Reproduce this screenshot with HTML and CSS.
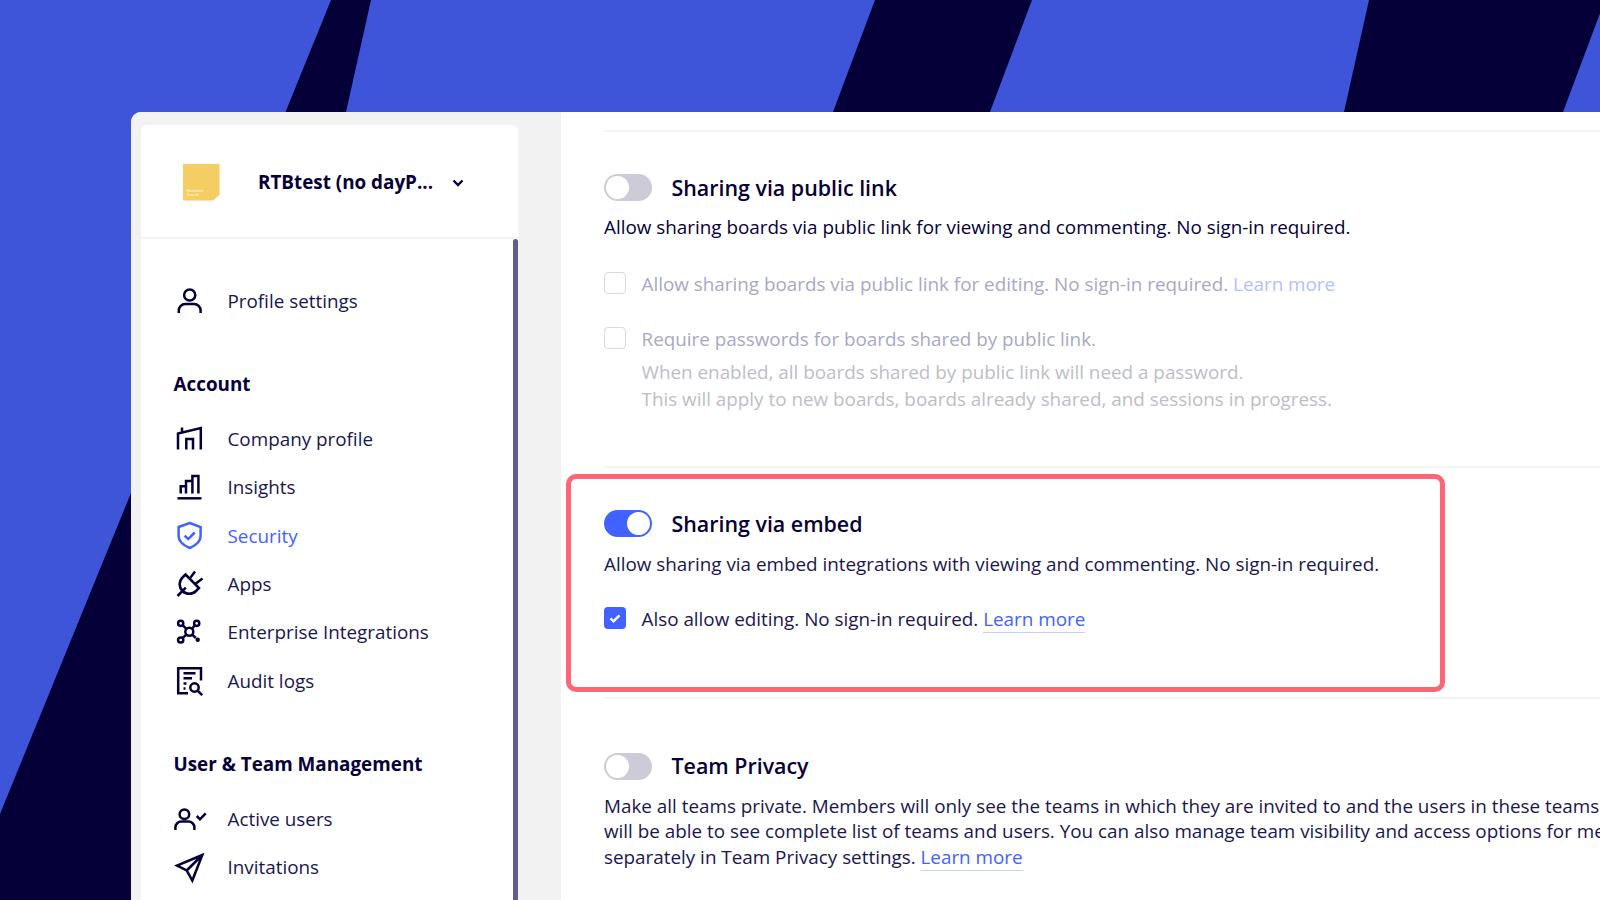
FILE: index.html
```html
<!DOCTYPE html>
<html lang="en">
<head>
<meta charset="utf-8">
<title>Security settings</title>
<link rel="stylesheet" href="styles.css">
</head>
<body>
<svg class="backdrop" viewBox="0 0 1600 900" aria-hidden="true">
  <polygon class="shape" points="331,0 371,0 346,112 285.5,112"/>
  <polygon class="shape" points="875,0 1032,0 990,112 833,112"/>
  <polygon class="shape" points="1369,0 1605,0 1563,112 1344,112"/>
  <polygon class="shape" points="131,493 131,900 0,900 0,814"/>
</svg>
<div class="panel">
  <div class="rail">
    <aside class="sidebar">
      <header class="account">
        <div class="logo"><span class="logo-text">Realtime<br>Board</span></div>
        <span class="account-name">RTBtest (no dayP...</span>
        <svg class="chevron" viewBox="0 0 12 8"><path d="M1.5 1.5 6 6l4.5-4.5"/></svg>
      </header>
      <div class="side-body">
        <nav class="nav">
          <a class="row">
            <svg class="icon" viewBox="0 0 30 30"><circle cx="14.7" cy="9" r="5.6"/><path d="M3.8 27v-2.5a6.5 6.5 0 0 1 6.5-6.5h8.8a6.5 6.5 0 0 1 6.5 6.5V27"/></svg>
            <span>Profile settings</span>
          </a>
          <h3 class="group">Account</h3>
          <a class="row">
            <svg class="icon" viewBox="0 0 30 30"><path d="M3 25.5V9.5L25.8 4V25.5M7 3.5V8.5M11.3 25.5V15H18V25.5"/></svg>
            <span>Company profile</span>
          </a>
          <a class="row">
            <svg class="icon" viewBox="0 0 30 30"><path d="M2.5 26.3H26.5"/><path d="M5.7 21.5V14.2H11M11 21.5V8.9H17.4V21.5M17.4 21.5V4H23.4V21.5"/></svg>
            <span>Insights</span>
          </a>
          <a class="row row-active">
            <svg class="icon" viewBox="0 0 30 30"><path d="M14.7 2 25.6 6V15c0 5.2-4.7 9.4-10.9 12C8.5 24.4 3.6 20.2 3.6 15V6Z"/><path d="M9.6 14.6l3.6 3.5 6.6-6.6"/></svg>
            <span>Security</span>
          </a>
          <a class="row">
            <svg class="icon" viewBox="0 0 30 30"><path d="M10.5 5.5 24 19l-3 3a9.5 9.5 0 0 1-13.5-13.5ZM14.8 9.5 20 2.5M20.2 15 27.5 9.5M10.8 18.6 2.5 27"/></svg>
            <span>Apps</span>
          </a>
          <a class="row">
            <svg class="icon" viewBox="0 0 30 30"><circle cx="14.3" cy="14.7" r="4"/><circle cx="5.7" cy="6.3" r="2.6"/><circle cx="21.7" cy="6.3" r="2.6"/><circle cx="5.7" cy="23" r="2.6"/><circle class="dot" cx="22.7" cy="22.8" r="2.2"/><path d="M7.6 8.2 11.4 11.8M19.9 8.1 17.2 11.8M7.6 21 11.4 17.6M17.2 17.6 20.8 21"/></svg>
            <span>Enterprise Integrations</span>
          </a>
          <a class="row">
            <svg class="icon" viewBox="0 0 30 30"><path d="M26 14.5V2.3H3.2V27.3H13M8.5 7.3H20.5M8.5 12.3H17M8.5 17.5H11.5M8.5 22.5H10.5"/><circle cx="19.5" cy="21.5" r="4.2"/><path d="M22.8 24.8 27.2 29.2"/></svg>
            <span>Audit logs</span>
          </a>
          <h3 class="group">User &amp; Team Management</h3>
          <a class="row">
            <svg class="icon" viewBox="0 0 30 30"><circle cx="9.4" cy="10.3" r="4.8"/><path d="M0.4 26V23.5a6 6 0 0 1 6-6h7a6 6 0 0 1 6 6V26M21.7 12 25 15.3 30.7 9.4"/></svg>
            <span>Active users</span>
          </a>
          <a class="row">
            <svg class="icon" viewBox="0 0 30 30"><path d="M27.3 3 2 13.5 11.7 18.5 17.3 28.5ZM27.3 3 11.7 18.5"/></svg>
            <span>Invitations</span>
          </a>
        </nav>
        <div class="scrollbar"></div>
      </div>
    </aside>
  </div>
  <main class="main">
    <hr class="rule rule-top">
    <section class="setting setting-public">
      <div class="title-row">
        <span class="toggle"><span class="knob"></span></span>
        <h2 class="title">Sharing via public link</h2>
      </div>
      <p class="text">Allow sharing boards via public link for viewing and commenting. No sign-in required.</p>
      <div class="check-row check-first is-disabled">
        <span class="check"></span>
        <span>Allow sharing boards via public link for editing. No sign-in required. <a class="link">Learn more</a></span>
      </div>
      <div class="check-row check-second is-disabled">
        <span class="check"></span>
        <span>Require passwords for boards shared by public link.</span>
      </div>
      <p class="hint">When enabled, all boards shared by public link will need a password.<br>This will apply to new boards, boards already shared, and sessions in progress.</p>
    </section>
    <hr class="rule rule-mid">
    <section class="setting setting-embed">
      <div class="title-row">
        <span class="toggle toggle-on"><span class="knob"></span></span>
        <h2 class="title">Sharing via embed</h2>
      </div>
      <p class="text text-embed">Allow sharing via embed integrations with viewing and commenting. No sign-in required.</p>
      <div class="check-row check-embed">
        <span class="check check-on"><svg viewBox="0 0 22 22"><path d="M6.5 11.3l3 3 6-6"/></svg></span>
        <span>Also allow editing. No sign-in required. <a class="link">Learn more</a></span>
      </div>
    </section>
    <hr class="rule rule-low">
    <section class="setting setting-team">
      <div class="title-row">
        <span class="toggle"><span class="knob"></span></span>
        <h2 class="title">Team Privacy</h2>
      </div>
      <p class="text text-long">Make all teams private. Members will only see the teams in which they are invited to and the users in these teams. Only Company admins<br>will be able to see complete list of teams and users. You can also manage team visibility and access options for members<br>separately in Team Privacy settings. <a class="link">Learn more</a></p>
    </section>
  </main>
</div>
</body>
</html>
```
FILE: styles.css
```css
* { box-sizing: border-box; }
html, body { margin: 0; height: 100%; }
body {
  position: relative;
  height: 900px;
  overflow: hidden;
  background: #3f55d9;
  font-family: "Open Sans", sans-serif;
  color: #050038;
  padding: 112px 0 0 131px;
}
.backdrop { position: absolute; left: 0; top: 0; width: 1600px; height: 900px; }
.shape { fill: #050038; }

.panel {
  position: relative;
  display: flex;
  height: 788px;
  background: #fff;
  border-top-left-radius: 10px;
  overflow: hidden;
}
.rail {
  flex: 0 0 430px;
  padding: 13px 0 0 10px;
  background: #f2f2f2;
}
.sidebar {
  width: 377px;
  height: 100%;
  background: #fff;
  border-radius: 6px 6px 0 0;
  display: flex;
  flex-direction: column;
}
.account {
  flex: 0 0 114px;
  display: flex;
  align-items: center;
  padding: 2px 0 0 41.5px;
  border-bottom: 2px solid #f4f4f4;
}
.logo {
  position: relative;
  flex: 0 0 37px;
  height: 37px;
  background: #f4ce62;
  clip-path: polygon(0 0, 100% 0, 100% 84%, 84% 100%, 0 100%);
  display: flex;
  align-items: flex-end;
  padding: 0 0 3px 4px;
}
.logo-text {
  font-size: 4px;
  line-height: 4.5px;
  font-weight: 600;
  color: #fdf3d6;
}
.account-name {
  margin-left: 38.5px;
  font-size: 18.85px;
  font-weight: 700;
  white-space: nowrap;
}
.chevron {
  width: 12px;
  height: 8px;
  margin: 2px 0 0 19px;
  fill: none;
  stroke: #050038;
  stroke-width: 2.4;
}
.side-body { flex: 1; min-height: 0; display: flex; }
.nav { flex: 1; padding: 37.8px 0 0 32.5px; }
.scrollbar {
  flex: 0 0 5px;
  background: #615f85;
  border-radius: 3px 3px 0 0;
}
.row {
  display: flex;
  align-items: center;
  gap: 22.5px;
  height: 48.4px;
  padding-left: 1.5px;
  font-size: 18.85px;
  color: #1a1650;
}
.icon {
  flex: 0 0 30px;
  width: 30px;
  height: 30px;
  overflow: visible;
  fill: none;
  stroke: #050038;
  stroke-width: 2.5;
}
.dot { fill: #050038; stroke: none; }
.row-active { color: #4262ff; }
.row-active .icon { stroke: #4262ff; }
.group {
  margin: 44.5px 0 17px;
  font-size: 18.85px;
  line-height: 28px;
  font-weight: 700;
}

.main { flex: 1; min-width: 0; padding: 18px 0 0 43px; overflow: hidden; }
.rule { margin: 0; border: 0; height: 2px; background: #f4f4f4; }
.setting-public { margin-top: 42px; }
.rule-mid { margin-top: 53px; }
.setting-embed {
  width: 879px;
  margin: 6px 0 0 -38px;
  padding: 31px 0 55px 33px;
  border: 5px solid #ff6575;
  border-radius: 10px;
}
.rule-low { margin-top: 5px; }
.setting-team { margin-top: 54px; }

.title-row { display: flex; align-items: center; gap: 19.5px; height: 27px; }
.title {
  margin: 0;
  padding-bottom: 1px;
  font-size: 21.4px;
  font-weight: 600;
  white-space: nowrap;
}
.toggle {
  flex: 0 0 48px;
  height: 27px;
  padding: 2px;
  border-radius: 14px;
  background: #cccbd7;
  display: flex;
}
.knob { width: 23px; height: 23px; border-radius: 50%; background: #fff; }
.toggle-on { background: #4262ff; justify-content: flex-end; }
.text {
  margin: 13.8px 0 0;
  font-size: 18.85px;
  line-height: 25.5px;
  color: #1a1650;
  white-space: nowrap;
}
.text-embed { margin-top: 14.8px; }
.setting-public > .text { color: #050038; margin-top: 14.2px; }
.check-row {
  display: flex;
  align-items: center;
  gap: 15.5px;
  height: 25.5px;
  font-size: 18.85px;
  color: #1a1650;
  white-space: nowrap;
}
.check-first { margin-top: 30.3px; }
.check-second { margin-top: 29.5px; }
.check-embed { margin-top: 28.7px; }
.check {
  flex: 0 0 22px;
  height: 22px;
  margin-top: -2px;
  border: 1.5px solid #d9d8e4;
  border-radius: 4px;
  background: #fff;
}
.check-on { border: 0; background: #4262ff; }
.check-on svg {
  display: block;
  width: 22px;
  height: 22px;
  fill: none;
  stroke: #fff;
  stroke-width: 2.4;
}
.link {
  color: #4262ff;
  border-bottom: 1px solid #c6d0ff;
}
.is-disabled { color: #a9a8c4; }
.is-disabled .link { color: #b3c0ff; border-bottom: 0; }
.hint {
  margin: 8px 0 0 37.5px;
  font-size: 18.85px;
  line-height: 27px;
  color: #bdbdc6;
  white-space: nowrap;
}
```
